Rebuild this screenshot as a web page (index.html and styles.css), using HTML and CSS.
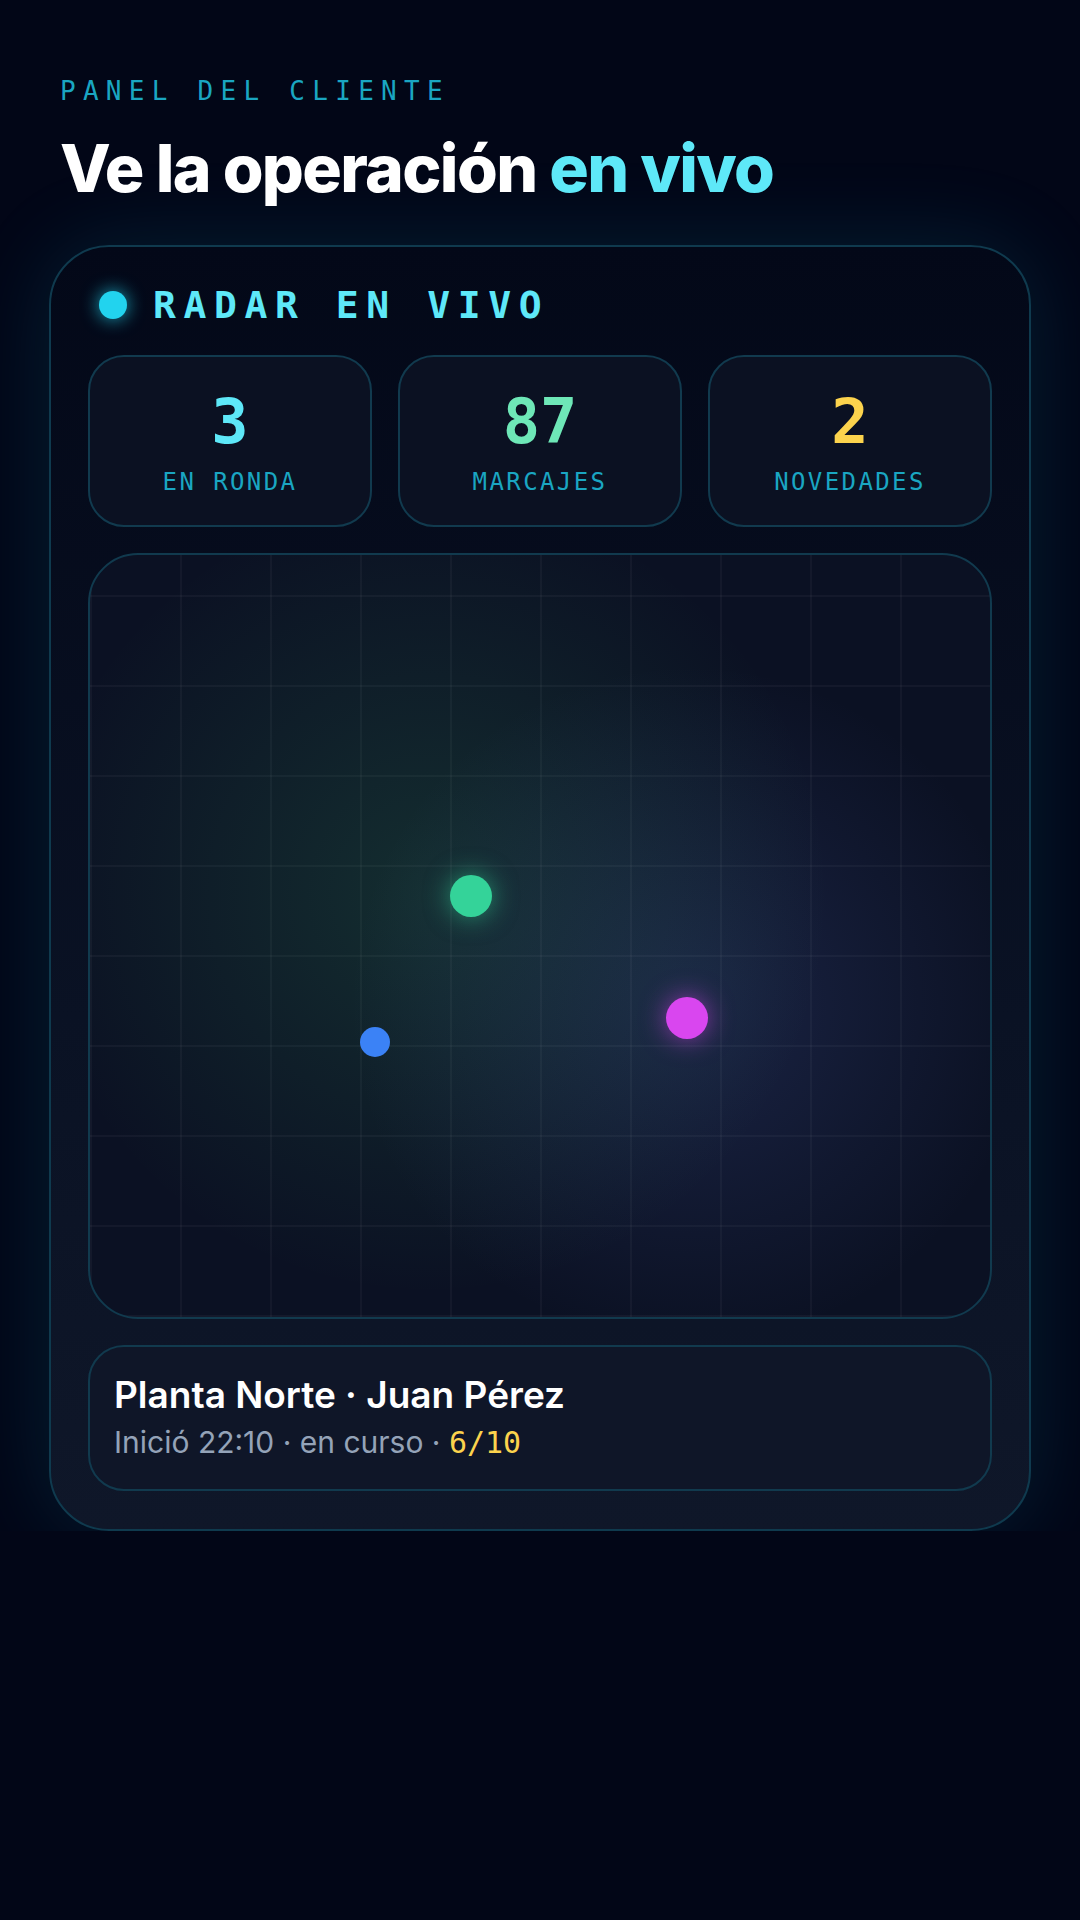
FILE: index.html
```html
<!DOCTYPE html>
<html lang="es">

<head>
    <meta charset="UTF-8">
    <meta name="viewport" content="width=device-width, initial-scale=1.0">
    <title>Panel del cliente</title>
    <link rel="stylesheet" href="styles.css">
</head>

<body>

    <div class="page">
        <header class="intro">
            <p class="eyebrow">PANEL DEL CLIENTE</p>
            <h1 class="title">Ve la operación <span class="accent">en vivo</span></h1>
        </header>

        <section class="radar-card">
            <div class="radar-head">
                <span class="live-dot"></span>
                <span class="radar-label">RADAR EN VIVO</span>
            </div>

            <div class="stats">
                <div class="stat">
                    <div class="stat-value cyan">3</div>
                    <div class="stat-label">EN RONDA</div>
                </div>
                <div class="stat">
                    <div class="stat-value green">87</div>
                    <div class="stat-label">MARCAJES</div>
                </div>
                <div class="stat">
                    <div class="stat-value amber">2</div>
                    <div class="stat-label">NOVEDADES</div>
                </div>
            </div>

            <div class="map">
                <span class="pin pin-green"></span>
                <span class="pin pin-magenta"></span>
                <span class="pin pin-blue"></span>
            </div>

            <div class="round-info">
                <div class="round-title">Planta Norte · Juan Pérez</div>
                <div class="round-meta">Inició 22:10 · en curso · <span class="progress">6/10</span></div>
            </div>
        </section>
    </div>

</body>

</html>
```

FILE: styles.css
```css
body {
    margin: 0;
    background-color: #020617;
    font-family: Inter, "Noto Sans", sans-serif;
    color: #fff;
}

.page {
    padding: 75px 49px 0;
}

.intro {
    padding-left: 11px;
}

.eyebrow {
    margin: 0;
    font-family: "DejaVu Sans Mono", monospace;
    font-size: 26px;
    line-height: 32px;
    letter-spacing: 0.28em;
    color: #1aa6c2;
}

.title {
    margin: 25px 0 0;
    font-size: 66px;
    line-height: 1.1;
    font-weight: 800;
    letter-spacing: -0.025em;
}

.accent {
    color: #5ee8f8;
}

/* main radar card */
.radar-card {
    margin-top: 40px;
    padding: 36px 37px 38px;
    border: 2px solid #0f3a4e;
    border-radius: 60px;
    background: linear-gradient(180deg, #030818 0%, #0a1224 60%, #0f1729 100%);
    box-shadow: 0 0 90px rgba(34, 211, 238, 0.13);
    display: flex;
    flex-direction: column;
    gap: 26px;
}

.radar-head {
    display: flex;
    align-items: center;
    gap: 26px;
    padding-left: 11px;
    height: 44px;
    margin-bottom: 2px;
}

.live-dot {
    width: 28px;
    height: 28px;
    border-radius: 50%;
    background: #22d3ee;
    box-shadow: 0 0 18px rgba(34, 211, 238, 0.8);
}

.radar-label {
    font-family: "DejaVu Sans Mono", monospace;
    font-weight: bold;
    font-size: 38px;
    line-height: 44px;
    letter-spacing: 0.2em;
    color: #5ee8f8;
}

.stats {
    display: grid;
    grid-template-columns: repeat(3, 1fr);
    gap: 26px;
}

.stat {
    padding: 34px 0 28px;
    border: 2px solid #113a4e;
    border-radius: 36px;
    background: #0b1122;
    text-align: center;
    font-family: "DejaVu Sans Mono", monospace;
}

.stat-value {
    font-size: 62px;
    line-height: 62px;
    font-weight: bold;
}

.stat-label {
    margin-top: 14px;
    font-size: 24px;
    line-height: 30px;
    letter-spacing: 0.1em;
    color: #1aa6c2;
}

.cyan {
    color: #5ee8f8;
}

.green {
    color: #6ee7b7;
}

.amber {
    color: #fcd34d;
}

/* map with grid */
.map {
    position: relative;
    height: 762px;
    border: 2px solid #113a4e;
    border-radius: 50px;
    overflow: hidden;
    background-color: #0b1123;
    background-image:
        linear-gradient(rgba(255, 255, 255, 0.035) 2px, transparent 2px),
        linear-gradient(90deg, rgba(255, 255, 255, 0.035) 2px, transparent 2px),
        radial-gradient(circle 400px at 340px 340px, rgba(74, 222, 128, 0.14), transparent 100%),
        radial-gradient(circle 340px at 600px 450px, rgba(96, 120, 220, 0.18), transparent 100%);
    background-size: 90px 90px, 90px 90px, 100% 100%, 100% 100%;
    background-position: 0 40px, 0 0, 0 0, 0 0;
}

.pin {
    position: absolute;
    border-radius: 50%;
}

.pin-green {
    left: 360px;
    top: 320px;
    width: 42px;
    height: 42px;
    background: #34d399;
    box-shadow: 0 0 26px rgba(52, 211, 153, 0.6);
}

.pin-magenta {
    left: 576px;
    top: 442px;
    width: 42px;
    height: 42px;
    background: #d946ef;
    box-shadow: 0 0 26px rgba(217, 70, 239, 0.6);
}

.pin-blue {
    left: 270px;
    top: 472px;
    width: 30px;
    height: 30px;
    background: #3b82f6;
}

.round-info {
    padding: 26px 24px 27px;
    border: 2px solid #113a4e;
    border-radius: 36px;
    background: #0f1628;
}

.round-title {
    font-size: 37px;
    line-height: 1.2;
    font-weight: 600;
}

.round-meta {
    margin-top: 6px;
    font-size: 30px;
    line-height: 1.3;
    color: #94a3b8;
}

.progress {
    font-family: "DejaVu Sans Mono", monospace;
    color: #fcd34d;
}
```
